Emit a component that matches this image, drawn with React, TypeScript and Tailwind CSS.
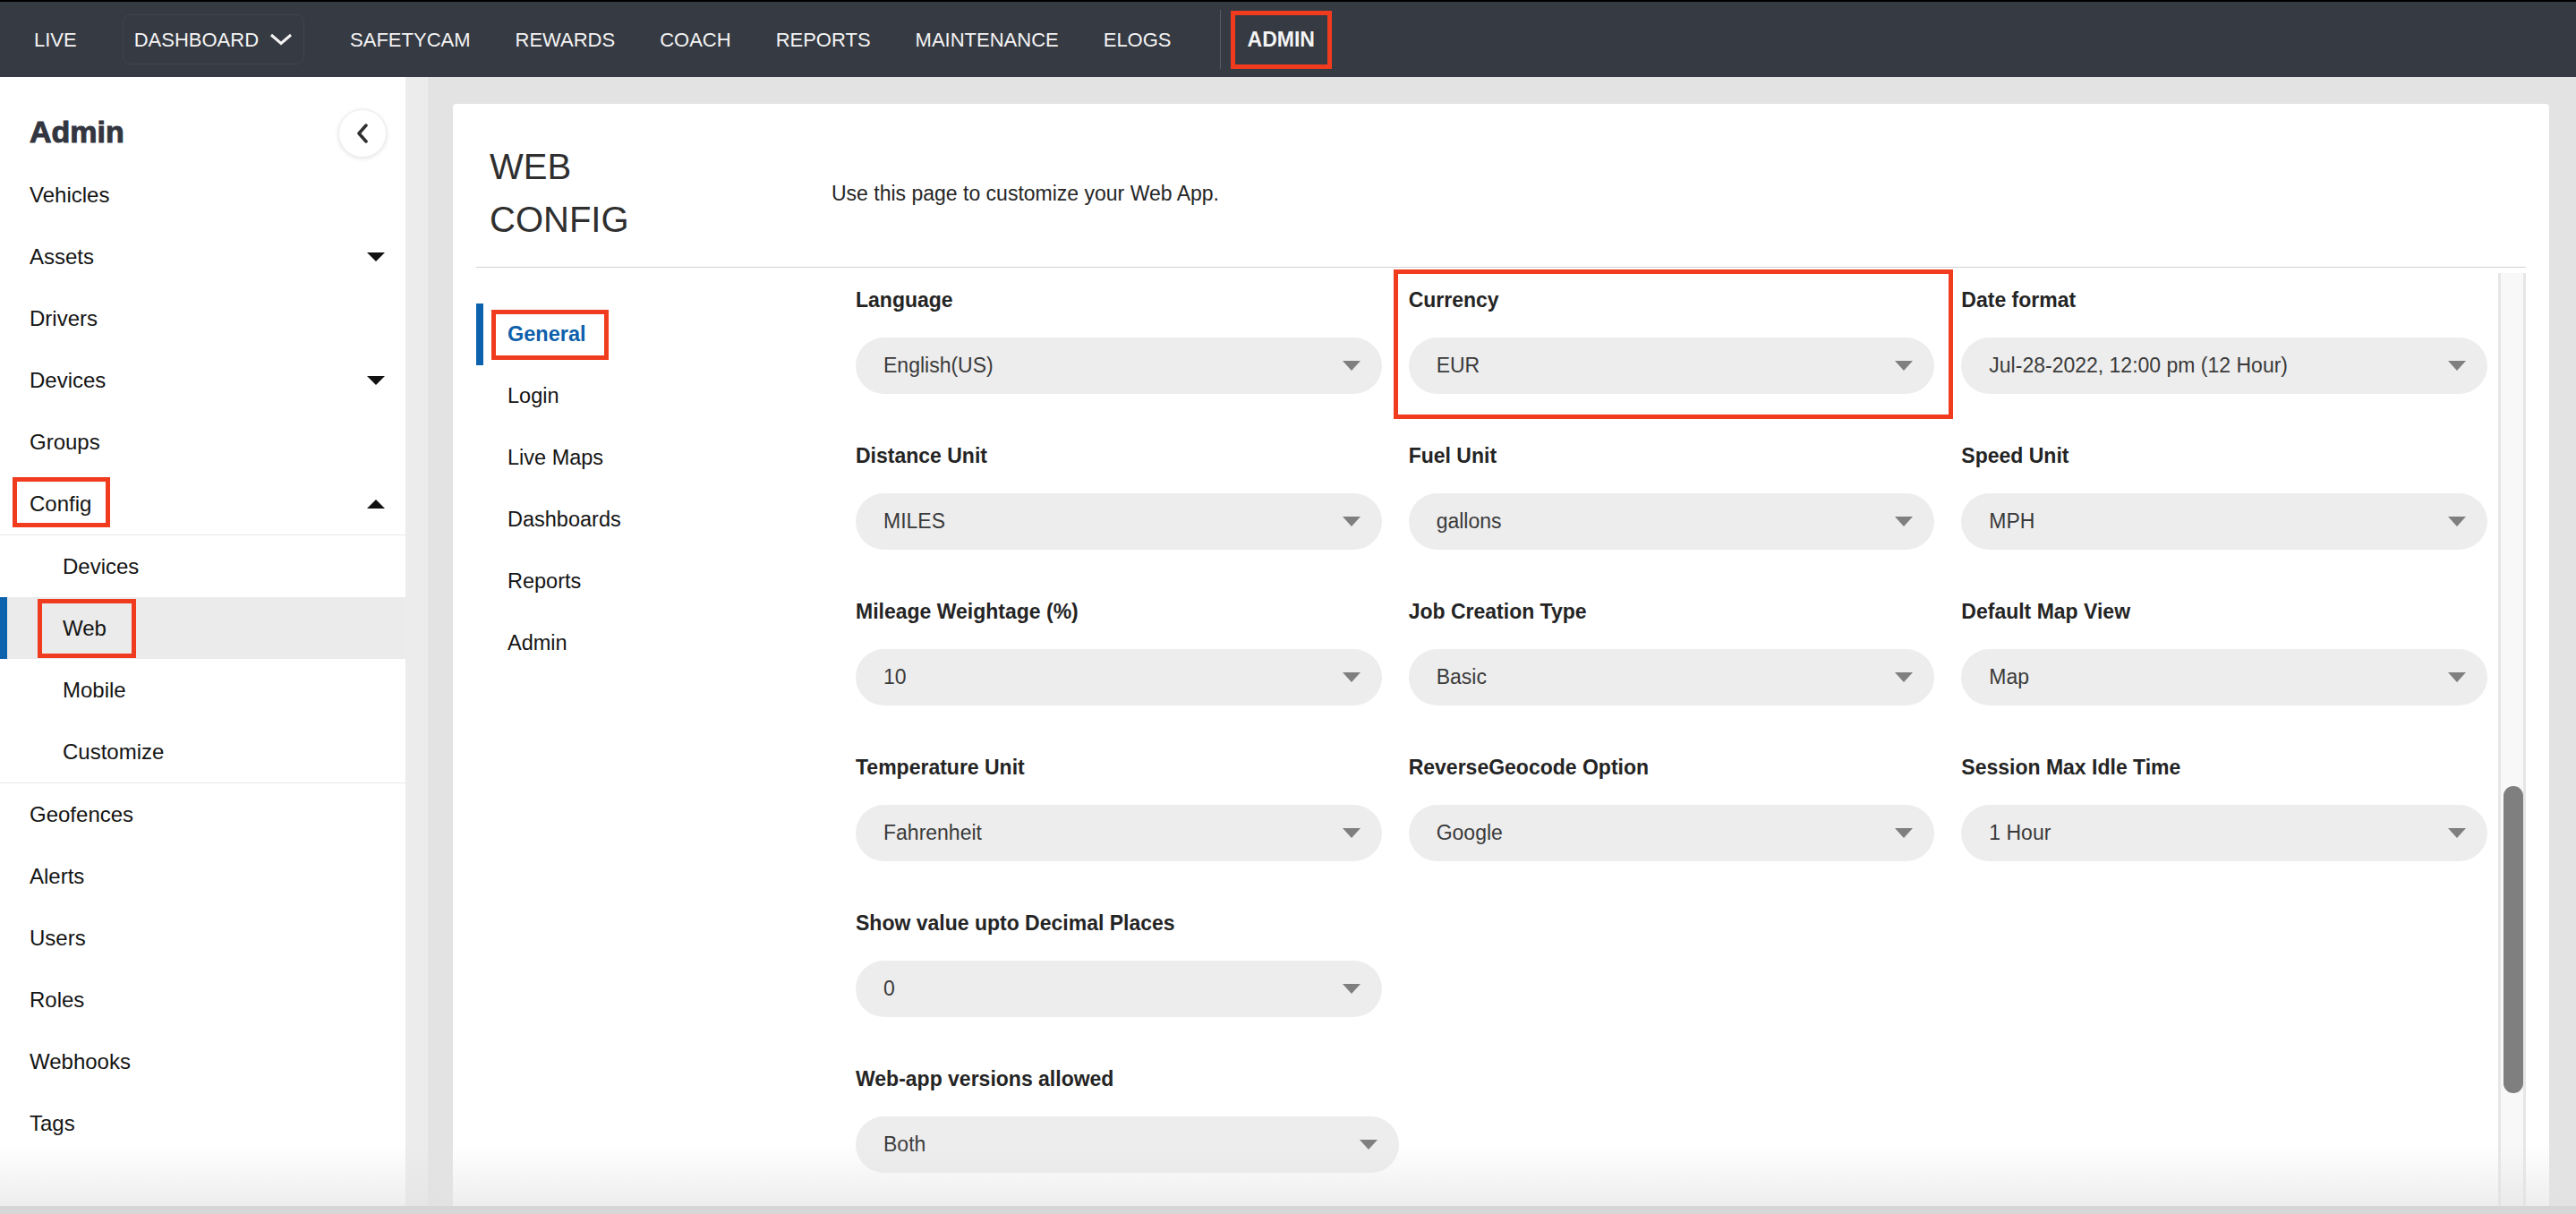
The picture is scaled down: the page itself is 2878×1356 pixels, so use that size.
import React from "react";

const BLUE = "#0d5fab";

function Caret({ up = false }: { up?: boolean }) {
  return (
    <svg width="20" height="10" viewBox="0 0 20 10">
      {up ? <path d="M0 10H20L10 0Z" fill="#111" /> : <path d="M0 0H20L10 10Z" fill="#111" />}
    </svg>
  );
}

function SelectBox({ value, wide = false }: { value: string; wide?: boolean }) {
  return (
    <div
      className={`${wide ? "w-[607px]" : "w-full"} h-[63px] rounded-full bg-[#ededed] flex items-center justify-between pl-[31px] pr-[24px] text-[23px] text-[#3a3a3a]`}
    >
      <span>{value}</span>
      <svg width="20" height="11" viewBox="0 0 20 11">
        <path d="M0 0H20L10 11Z" fill="#7f7f7f" />
      </svg>
    </div>
  );
}

type Field = { label: string; value: string; highlight?: boolean; wide?: boolean };

function FieldBox({ f }: { f: Field }) {
  return (
    <div className="relative flex flex-col">
      {f.highlight && (
        <div className="absolute -left-[17px] -right-[21px] -top-[19px] -bottom-[28px] border-[5px] border-[#f03b1f] pointer-events-none" />
      )}
      <div className="h-[30px] leading-[30px] text-[23px] font-bold text-[#242424] mb-[27px]">{f.label}</div>
      <SelectBox value={f.value} wide={f.wide} />
    </div>
  );
}

const rows: Field[][] = [
  [
    { label: "Language", value: "English(US)" },
    { label: "Currency", value: "EUR", highlight: true },
    { label: "Date format", value: "Jul-28-2022, 12:00 pm (12 Hour)" },
  ],
  [
    { label: "Distance Unit", value: "MILES" },
    { label: "Fuel Unit", value: "gallons" },
    { label: "Speed Unit", value: "MPH" },
  ],
  [
    { label: "Mileage Weightage (%)", value: "10" },
    { label: "Job Creation Type", value: "Basic" },
    { label: "Default Map View", value: "Map" },
  ],
  [
    { label: "Temperature Unit", value: "Fahrenheit" },
    { label: "ReverseGeocode Option", value: "Google" },
    { label: "Session Max Idle Time", value: "1 Hour" },
  ],
  [{ label: "Show value upto Decimal Places", value: "0" }],
  [{ label: "Web-app versions allowed", value: "Both", wide: true }],
];

const navItems = ["SAFETYCAM", "REWARDS", "COACH", "REPORTS", "MAINTENANCE", "ELOGS"];

function SideItem({ label, caret, box }: { label: string; caret?: "up" | "down"; box?: boolean }) {
  return (
    <div className="relative h-[69px] flex items-center justify-between pl-[33px] pr-[23px] text-[24px] text-[#141414]">
      {box && <div className="absolute left-[14px] top-[5px] w-[109px] h-[56px] border-[5px] border-[#f03b1f]" />}
      <span>{label}</span>
      {caret && <Caret up={caret === "up"} />}
    </div>
  );
}

export default function App() {
  return (
    <div className="relative w-[2878px] h-[1356px] overflow-hidden flex flex-col font-['Liberation_Sans',Arial,sans-serif] bg-[#e5e5e5]">
      {/* Top nav */}
      <div className="h-[86px] shrink-0 bg-[#363a43] border-t-2 border-black flex items-center pl-[38px] text-[22px] text-[#f4f4f4]">
        <span>LIVE</span>
        <div className="ml-[51px] h-[56px] px-[12px] rounded-[8px] border border-[#40444d] flex items-center gap-[12px]">
          <span>DASHBOARD</span>
          <svg width="26" height="14" viewBox="0 0 26 14">
            <polyline points="2,2 13,11.5 24,2" fill="none" stroke="#f4f4f4" strokeWidth="3" />
          </svg>
        </div>
        <div className="ml-[51px] flex items-center gap-[50px]">
          {navItems.map((n) => (
            <span key={n}>{n}</span>
          ))}
        </div>
        <div className="ml-[54px] flex items-center gap-[11px]">
          <div className="w-[1px] h-[66px] bg-[#585c65]" />
          <div className="h-[65px] border-[5px] border-[#f03b1f] px-[14px] flex items-center font-bold text-[23px]">ADMIN</div>
        </div>
      </div>

      <div className="flex-1 flex min-h-0">
        {/* Sidebar */}
        <div className="w-[453px] shrink-0 bg-white flex flex-col">
          <div className="h-[97px] flex items-start justify-between pl-[33px] pr-[21px] pt-[36px]">
            <div className="mt-[4px] leading-[42px] text-[34px] font-bold text-[#333640] [-webkit-text-stroke:1px_#333640]">Admin</div>
            <div className="w-[54px] h-[54px] rounded-full bg-white border border-[#eeeeee] shadow-[0_1px_5px_rgba(0,0,0,0.12)] flex items-center justify-center">
              <svg width="14" height="22" viewBox="0 0 14 22">
                <polyline points="11,2 3,11 11,20" fill="none" stroke="#2e2e2e" strokeWidth="3.5" strokeLinejoin="round" strokeLinecap="round" />
              </svg>
            </div>
          </div>
          <SideItem label="Vehicles" />
          <SideItem label="Assets" caret="down" />
          <SideItem label="Drivers" />
          <SideItem label="Devices" caret="down" />
          <SideItem label="Groups" />
          <SideItem label="Config" caret="up" box />
          <div className="border-y border-[#e8e8e8] text-[24px] text-[#141414]">
            <div className="h-[69px] flex items-center pl-[70px]">Devices</div>
            <div className="relative h-[69px] flex items-center pl-[62px] bg-[#ebebeb] border-l-[8px] border-[#0d62ad]">
              <div className="absolute left-[34px] top-[2px] w-[110px] h-[66px] border-[5px] border-[#f03b1f]" />
              <span>Web</span>
            </div>
            <div className="h-[69px] flex items-center pl-[70px]">Mobile</div>
            <div className="h-[69px] flex items-center pl-[70px]">Customize</div>
          </div>
          <SideItem label="Geofences" />
          <SideItem label="Alerts" />
          <SideItem label="Users" />
          <SideItem label="Roles" />
          <SideItem label="Webhooks" />
          <SideItem label="Tags" />
        </div>

        {/* Main */}
        <div className="flex-1 flex min-w-0 border-l-[25px] border-[#ececec] bg-[#e3e3e3] pl-[28px] pt-[30px] pr-[30px]">
          <div className="flex-1 flex flex-col bg-white rounded-t-[4px] px-[26px] min-w-0">
            {/* Header */}
            <div className="h-[183px] shrink-0 flex items-center pl-[15px] pt-[18px] border-b border-[#d2d2d2]">
              <div className="w-[382px] text-[40px] leading-[59px] text-[#2f2f2f]">
                <div>WEB</div>
                <div>CONFIG</div>
              </div>
              <div className="text-[23px] text-[#262626]">Use this page to customize your Web App.</div>
            </div>

            {/* Body */}
            <div className="flex-1 flex min-h-0">
              <div className="w-[424px] shrink-0 pt-[40px] text-[23.5px] text-[#141414]">
                <div className="relative h-[69px] flex items-center pl-[27px] border-l-[8px] border-[#0d62ad]">
                  <div className="absolute left-[9px] top-[7px] w-[131px] h-[56px] border-[5px] border-[#f03b1f]" />
                  <span className="font-bold" style={{ color: BLUE }}>General</span>
                </div>
                {["Login", "Live Maps", "Dashboards", "Reports", "Admin"].map((t) => (
                  <div key={t} className="h-[69px] flex items-center pl-[35px]">
                    {t}
                  </div>
                ))}
              </div>

              <div className="flex-1 min-w-0 pt-[21px] flex flex-col gap-y-[54px]">
                {rows.map((r, i) => (
                  <div key={i} className="grid grid-cols-3 gap-x-[30px]">
                    {r.map((f) => (
                      <FieldBox key={f.label} f={f} />
                    ))}
                  </div>
                ))}
              </div>

              {/* Scrollbar */}
              <div className="ml-[12px] mt-[6px] w-[31px] shrink-0 bg-[#f8f8f8] border-x-[3px] border-[#e6e6e6] relative">
                <div className="absolute left-[3px] right-[0px] top-[573px] h-[343px] rounded-full bg-[#7f7f7f]" />
              </div>
            </div>
          </div>
        </div>
      </div>

      {/* bottom window shading */}
      <div className="absolute inset-x-0 bottom-[9px] h-[70px] bg-gradient-to-b from-transparent to-[#e2e2e2]/60 pointer-events-none" />
      <div className="absolute inset-x-0 bottom-0 h-[9px] bg-[#d6d6d6]" />
    </div>
  );
}
